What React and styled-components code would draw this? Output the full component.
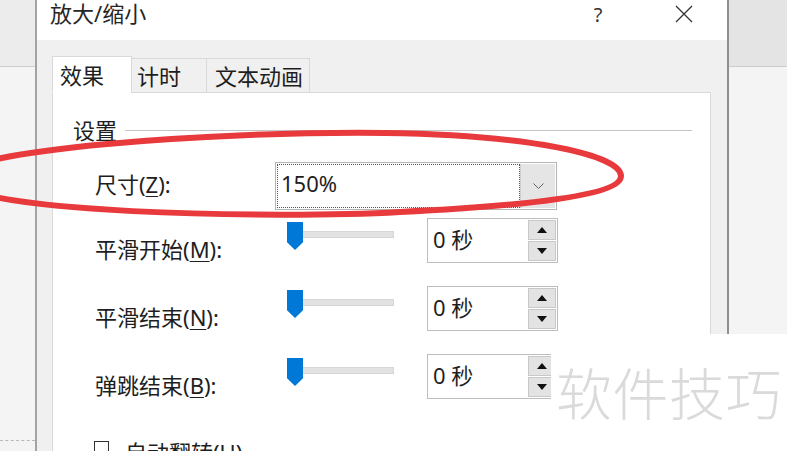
import React from "react";
import styled, { createGlobalStyle } from "styled-components";

const FONT = `"Noto Sans", "Noto Sans CJK SC", sans-serif`;

const GlobalStyle = createGlobalStyle`
  body {
    margin: 0;
    overflow: hidden;
    font-family: ${FONT};
    color: #1e1e1e;
  }
`;

const Page = styled.div`
  position: relative;
  display: flex;
  width: 787px;
  height: 451px;
  overflow: hidden;
  background: #f3f3f3;
`;

const Strip = styled.div`
  display: flex;
  flex-direction: column;
  width: ${(p) => p.width};
  flex: ${(p) => (p.grow ? 1 : "none")};
  box-shadow: ${(p) => (p.shadow ? "inset 10px 0 8px -6px rgba(0,0,0,0.12)" : "none")};
`;

const StripTop = styled.div`
  flex-shrink: 0;
  height: 66px;
  background: ${(p) => p.color};
  border-bottom: 1px solid #cdcdcd;
`;

const StripBottom = styled.div`
  flex: 1;
  background: #f4f4f4;
  display: flex;
  flex-direction: column;
  justify-content: flex-end;
`;

const Dashed = styled.div`
  height: 10px;
  border-top: 1px dashed #b8b8b8;
`;

const Dialog = styled.div`
  display: flex;
  flex-direction: column;
  flex: none;
  width: 690px;
  height: 451px;
  border-left: 2px solid #a3a3a3;
  border-right: 2px solid #8e8e8e;
  background: #f0f0f0;
`;

const TitleBar = styled.div`
  flex-shrink: 0;
  display: flex;
  align-items: flex-start;
  height: 40px;
  padding: 1px 0 0 13px;
  box-sizing: border-box;
  background: #ffffff;
`;

const Title = styled.div`
  font-size: 22px;
  line-height: 24px;
  color: #262626;
`;

const TitleButtons = styled.div`
  display: flex;
  margin-left: auto;
`;

const TitleButton = styled.div`
  width: 86px;
  height: 26px;
  display: flex;
  align-items: center;
  justify-content: center;
  font-size: 20px;
  color: #333;
`;

const Body = styled.div`
  flex: 1;
  min-height: 0;
  display: flex;
  flex-direction: column;
  padding: 16px 16px 0 15px;
`;

const TabList = styled.div`
  flex-shrink: 0;
  display: flex;
  align-items: flex-end;
  height: 37px;
  position: relative;
  z-index: 1;
  margin-bottom: -1px;
`;

const Tab = styled.div`
  box-sizing: border-box;
  width: ${(p) => p.width}px;
  height: ${(p) => (p.active ? 37 : 35)}px;
  padding-left: ${(p) => p.pad}px;
  padding-top: ${(p) => (p.active ? 5 : 4)}px;
  font-size: 22px;
  line-height: 26px;
  background: ${(p) => (p.active ? "#ffffff" : "#f0f0f0")};
  border: 1px solid #d9d9d9;
  border-bottom: ${(p) => (p.active ? "1px solid #ffffff" : "1px solid #d9d9d9")};
  margin-left: ${(p) => (p.first ? 0 : -1)}px;
`;

const Panel = styled.div`
  flex: 1;
  min-height: 0;
  overflow: hidden;
  background: #ffffff;
  border: 1px solid #d9d9d9;
  border-bottom: none;
  padding: 25px 18px 0 20px;
`;

const GroupHeader = styled.div`
  display: flex;
  align-items: center;
  height: 24px;
`;

const Legend = styled.div`
  font-size: 22px;
  line-height: 24px;
  padding-right: 8px;
`;

const GroupLine = styled.div`
  flex: 1;
  height: 1px;
  background: #c4c4c4;
`;

const Rows = styled.div`
  padding-left: 22px;
`;

const Row = styled.div`
  display: flex;
  align-items: flex-start;
  margin-top: ${(p) => p.gap}px;
`;

const Label = styled.div`
  width: 180px;
  font-size: 22px;
  line-height: 24px;
  padding-top: ${(p) => p.offset}px;
  white-space: nowrap;
  u {
    text-decoration-thickness: 1px;
    text-underline-offset: 3px;
  }
`;

const Combo = styled.div`
  display: flex;
  width: 282px;
  height: 48px;
  box-sizing: border-box;
  border: 1px solid #b4b4b4;
  padding: 1px;
`;

const ComboValue = styled.div`
  flex: 1;
  border: 1px dotted #555;
  font-size: 22px;
  line-height: 36px;
  padding-left: 3px;
`;

const ComboButton = styled.div`
  width: 34px;
  background: #e5e5e5;
  border-left: 1px solid #cfcfcf;
  display: flex;
  align-items: center;
  justify-content: center;
`;

const SliderArea = styled.div`
  width: 152px;
  box-sizing: border-box;
  padding: 4px 0 0 12px;
`;

const Slider = styled.div`
  position: relative;
  width: 107px;
  height: 28px;
  box-sizing: border-box;
  padding-top: 9px;
`;

const Track = styled.div`
  height: 7px;
  background: #e2e2e2;
  border: 1px solid #d6d6d6;
  box-sizing: border-box;
`;

const Thumb = styled.div`
  position: absolute;
  top: 0;
  left: 0;
  width: 16px;
  height: 28px;
  background: #0078d7;
  clip-path: polygon(0 0, 100% 0, 100% 72%, 50% 100%, 0 72%);
`;

const Spinner = styled.div`
  display: flex;
  width: 131px;
  height: 45px;
  box-sizing: border-box;
  border: 1px solid #bdbdbd;
  background: #fff;
`;

const SpinValue = styled.div`
  flex: 1;
  font-size: 22px;
  line-height: 40px;
  padding-left: 5px;
`;

const SpinButtons = styled.div`
  display: flex;
  flex-direction: column;
  gap: 1px;
  width: 28px;
  padding: 1px 1px 1px 0;
`;

const SpinButton = styled.div`
  flex: 1;
  background: #e3e3e3;
  border: 1px solid #c8c8c8;
  display: flex;
  align-items: center;
  justify-content: center;
`;

const CheckRow = styled.div`
  display: flex;
  align-items: flex-start;
  gap: 16px;
  margin-top: 41px;
  margin-left: -1px;
`;

const CheckBox = styled.div`
  width: 13px;
  height: 13px;
  border: 1px solid #333;
  margin-top: 1px;
  background: #fff;
`;

const CheckLabel = styled.div`
  font-size: 22px;
  line-height: 24px;
`;

const Overlay = styled.svg`
  position: absolute;
  left: 0;
  top: 0;
  pointer-events: none;
`;

const Watermark = styled.div`
  position: absolute;
  left: 551px;
  top: 334px;
  right: 0;
  bottom: 0;
  background: #ffffff;
  padding: 29px 0 0 5px;
  font-family: "Noto Sans CJK SC", sans-serif;
  font-weight: 300;
  font-size: 56px;
  line-height: 56px;
  letter-spacing: 0.5px;
  color: #dadada;
  white-space: nowrap;
`;

const Arrow = ({ up }) => (
  <svg width="10" height="6" viewBox="0 0 10 6">
    <path d={up ? "M0 6 L5 0 L10 6 Z" : "M0 0 L5 6 L10 0 Z"} fill="#111" />
  </svg>
);

const SpinBox = () => (
  <Spinner>
    <SpinValue>0 秒</SpinValue>
    <SpinButtons>
      <SpinButton>
        <Arrow up />
      </SpinButton>
      <SpinButton>
        <Arrow />
      </SpinButton>
    </SpinButtons>
  </Spinner>
);

const SliderControl = () => (
  <SliderArea>
    <Slider>
      <Track />
      <Thumb />
    </Slider>
  </SliderArea>
);

const timingRows = [
  { label: "平滑开始", key: "M", gap: 8 },
  { label: "平滑结束", key: "N", gap: 23 },
  { label: "弹跳结束", key: "B", gap: 23 },
];

export default function App() {
  return (
    <>
      <GlobalStyle />
      <Page>
        <Strip width="35px">
          <StripTop color="#ececec" />
          <StripBottom>
            <Dashed />
          </StripBottom>
        </Strip>
        <Dialog>
          <TitleBar>
            <Title>放大/缩小</Title>
            <TitleButtons>
              <TitleButton>?</TitleButton>
              <TitleButton>
                <svg width="18" height="18" viewBox="0 0 18 18">
                  <path d="M1 1 L17 17 M17 1 L1 17" stroke="#333" strokeWidth="1.3" />
                </svg>
              </TitleButton>
            </TitleButtons>
          </TitleBar>
          <Body>
            <TabList>
              <Tab active first width={80} pad={7}>效果</Tab>
              <Tab width={76} pad={5}>计时</Tab>
              <Tab width={104} pad={8}>文本动画</Tab>
            </TabList>
            <Panel>
              <GroupHeader>
                <Legend>设置</Legend>
                <GroupLine />
              </GroupHeader>
              <Rows>
                <Row gap={20}>
                  <Label offset={10}>
                    尺寸(<u>Z</u>):
                  </Label>
                  <Combo>
                    <ComboValue>150%</ComboValue>
                    <ComboButton>
                      <svg width="11" height="7" viewBox="0 0 11 7">
                        <path d="M0.5 0.5 L5.5 5.5 L10.5 0.5" fill="none" stroke="#666" strokeWidth="1" />
                      </svg>
                    </ComboButton>
                  </Combo>
                </Row>
                {timingRows.map((r) => (
                  <Row key={r.key} gap={r.gap}>
                    <Label offset={19}>
                      {r.label}(<u>{r.key}</u>):
                    </Label>
                    <SliderControl />
                    <SpinBox />
                  </Row>
                ))}
                <CheckRow>
                  <CheckBox />
                  <CheckLabel>
                    自动翻转(<u>U</u>)
                  </CheckLabel>
                </CheckRow>
              </Rows>
            </Panel>
          </Body>
        </Dialog>
        <Strip grow shadow>
          <StripTop color="#e4e4e4" />
          <StripBottom />
        </Strip>
        <Overlay width="787" height="451" viewBox="0 0 787 451">
          <path
            d="M -45 178 C -45 150 210 131 385 133 C 530 135 621 155 621 176 C 621 196 520 206 400 212 C 280 219 -45 214 -45 178 Z"
            fill="none"
            stroke="#e83a3c"
            strokeWidth="6"
          />
        </Overlay>
        <Watermark>软件技巧</Watermark>
      </Page>
    </>
  );
}
